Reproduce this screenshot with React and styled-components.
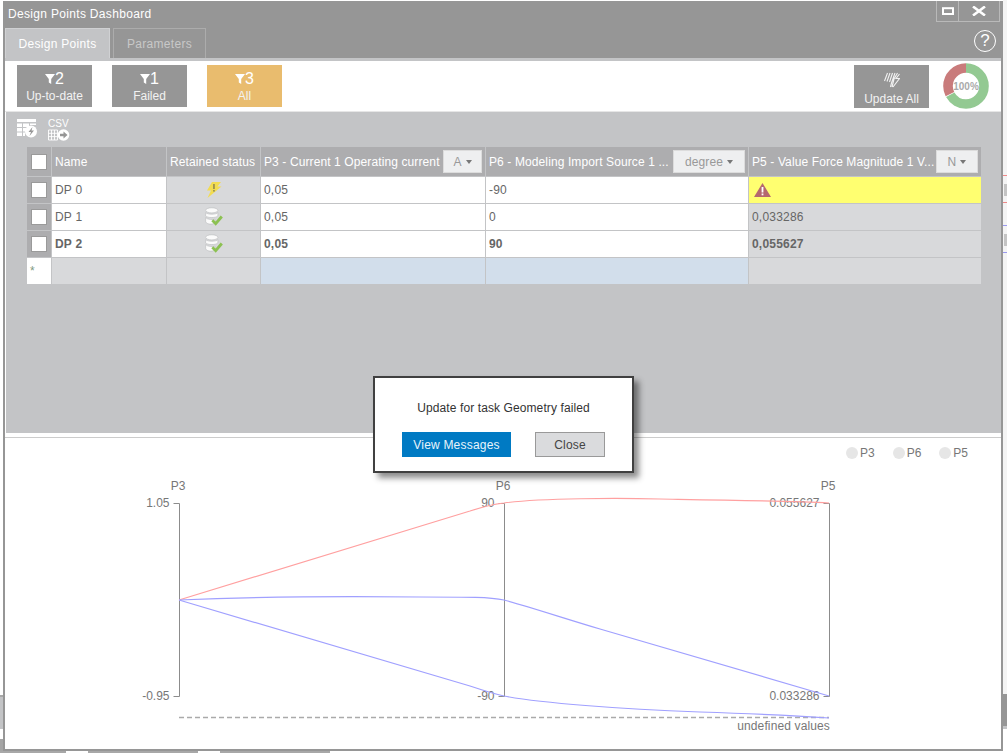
import styled, { createGlobalStyle } from 'styled-components'

const GlobalStyle = createGlobalStyle`
  html, body { margin: 0; padding: 0; }
  body {
    width: 1007px;
    height: 753px;
    overflow: hidden;
    font-family: "Liberation Sans", Arial, sans-serif;
    font-size: 12px;
    background:
      linear-gradient(#969696, #969696) right 694px / 4px 32px no-repeat,
      linear-gradient(#c3c4c6, #c3c4c6) right 726px / 4px 3px no-repeat,
      linear-gradient(#ee8888, #ee8888) right 175px / 4px 1px no-repeat,
      linear-gradient(#ee8888, #ee8888) right 202px / 4px 1px no-repeat,
      linear-gradient(#9999ee, #9999ee) right 225px / 4px 1px no-repeat,
      linear-gradient(#9999ee, #9999ee) right 252px / 4px 1px no-repeat,
      linear-gradient(#c4c4c4, #c4c4c4) right 184px / 3px 12px no-repeat,
      linear-gradient(#c4c4c4, #c4c4c4) right 234px / 3px 12px no-repeat,
      linear-gradient(#f4f4f4, #f4f4f4) right 0 / 4px 694px no-repeat,
      linear-gradient(#a8a8a8, #a8a8a8) left 695px / 3px 2px no-repeat,
      linear-gradient(#c3c4c6, #c3c4c6) left 697px / 3px 32px no-repeat,
      linear-gradient(#a5a5a5, #a5a5a5) left 739px / 3px 12px no-repeat,
      linear-gradient(#a8a8a8, #a8a8a8) 0 751px / 66px 2px no-repeat,
      linear-gradient(#a8a8a8, #a8a8a8) 88px 751px / 110px 2px no-repeat,
      linear-gradient(#a8a8a8, #a8a8a8) 220px 751px / 110px 2px no-repeat,
      #ffffff;
  }
`

const Win = styled.div`
  position: relative;
  box-sizing: border-box;
  margin: 1px 0 0 3px;
  width: 1000px;
  height: 750px;
  border: 2px solid #969696;
  border-top: 0;
  background: #fff;
  display: flex;
  flex-direction: column;
`

const TitleBar = styled.div`
  height: 27px;
  flex: none;
  background: #969696;
  display: flex;
  justify-content: space-between;
  color: #fff;
`

const Title = styled.div`
  padding: 6px 0 0 3px;
  font-size: 12px;
  letter-spacing: 0.32px;
`

const WinControls = styled.div`
  display: flex;
  margin-right: 1px;
  height: 20px;
  border: 1px solid #b9b9b9;
  border-top: 0;
`

const WinButton = styled.div`
  width: ${p => p.$w}px;
  display: flex;
  align-items: center;
  justify-content: center;
  & + & { border-left: 1px solid #b9b9b9; }
`

const TabRow = styled.div`
  height: 30px;
  flex: none;
  background: #969696;
  display: flex;
  align-items: flex-end;
  gap: 3px;
  padding-right: 5px;
`

const Tab = styled.div`
  box-sizing: border-box;
  height: 30px;
  width: ${p => p.$w}px;
  display: flex;
  align-items: center;
  justify-content: center;
  letter-spacing: 0.3px;
  border: 1px solid ${p => (p.$active ? '#d0d1d3' : '#acacac')};
  border-bottom: 0;
  background: ${p => (p.$active ? '#c3c4c6' : '#969696')};
  color: ${p => (p.$active ? '#fff' : '#c8c8c8')};
`

const Help = styled.div`
  box-sizing: border-box;
  width: 22px;
  height: 22px;
  margin: 0 0 6px auto;
  border: 1.5px solid #fff;
  border-radius: 50%;
  color: #fff;
  font-size: 17px;
  line-height: 19px;
  text-align: center;
`

const Divider = styled.div`
  height: 3px;
  flex: none;
  background: #c3c4c6;
`

const Toolbar = styled.div`
  box-sizing: border-box;
  height: 51px;
  flex: none;
  padding: 4px 12px 0;
  border-bottom: 1px solid #e6e6e6;
  display: flex;
  align-items: flex-start;
  gap: 20px;
`

const FilterButton = styled.div`
  width: 75px;
  height: ${p => (p.$tall ? 43 : 42)}px;
  background: ${p => (p.$active ? '#e9bc6e' : '#969696')};
  color: #fff;
  display: flex;
  flex-direction: column;
  align-items: center;
  box-sizing: border-box;
  padding-top: 4px;
`

const Count = styled.div`
  display: flex;
  align-items: center;
  height: 19px;
  font-size: 16px;
`

const Label = styled.div`
  margin-top: 1px;
  line-height: 14px;
  color: #f2f2f2;
`

const UpdateButton = styled(FilterButton)`
  margin-left: auto;
  padding-top: 7px;
  gap: 3px;
`

const Donut = styled.svg`
  margin: -2px 0 0 -6px;
  flex: none;
`

const Panel = styled.div`
  height: 321px;
  flex: none;
  margin-left: 1px;
  background: #c3c4c6;
  padding: 7px 0 0 11px;
  box-sizing: border-box;
`

const IconBar = styled.div`
  display: flex;
  align-items: flex-start;
  gap: 11px;
  height: 28px;
`

const CsvIcon = styled.div`
  display: flex;
  flex-direction: column;
  width: 22px;
  color: #fff;
  font-size: 10px;
  line-height: 10px;
`

const Table = styled.div`
  margin-left: 10px;
  width: 954px;
  display: grid;
  grid-template-columns: 24px 114px 93px 224px 262px 232px;
  grid-template-rows: 29px repeat(4, 26px);
  gap: 1px;
`

const tones = {
  head: '#adadaf',
  white: '#ffffff',
  grey: '#d8d9db',
  blue: '#d2deeb',
  warn: '#ffff70',
}

const Cell = styled.div`
  background: ${p => tones[p.$tone || 'white']};
  color: ${p => (p.$tone === 'head' ? '#fff' : '#666')};
  font-weight: ${p => (p.$bold ? 700 : 400)};
  letter-spacing: ${p => (p.$tone === 'head' ? 0.11 : 0.2)}px;
  display: flex;
  align-items: center;
  justify-content: ${p => (p.$center ? 'center' : 'flex-start')};
  padding: 0 ${p => (p.$center ? 0 : 3)}px;
  white-space: nowrap;
  overflow: hidden;
  min-width: 0;
`

const Check = styled.div`
  box-sizing: border-box;
  width: 16px;
  height: 16px;
  background: #fff;
  border: 1px solid #9a9a9a;
`

const Star = styled.span`
  color: #7f9a7f;
  font-size: 12px;
  margin-right: auto;
  margin-left: 3px;
`

const Unit = styled.div`
  box-sizing: border-box;
  margin-left: auto;
  width: ${p => p.$w}px;
  height: 23px;
  flex: none;
  background: #eeeff0;
  border: 1px solid #dcdcdc;
  color: #999;
  display: flex;
  align-items: center;
  justify-content: center;
  gap: 4px;
  &::after {
    content: '';
    border: 3.5px solid transparent;
    border-top: 4px solid #777;
    border-bottom: 0;
  }
`

const ChartArea = styled.div`
  margin-top: 4px;
  border-top: 1px solid #cccccc;
  flex: 1;
  display: flex;
  flex-direction: column;
`

const Legend = styled.div`
  height: 32px;
  flex: none;
  display: flex;
  justify-content: flex-end;
  padding: 8px 33px 0 0;
  box-sizing: border-box;
  gap: 18px;
`

const LegendItem = styled.div`
  display: flex;
  align-items: center;
  gap: 2px;
  height: 14px;
  color: #777;
  &::before {
    content: '';
    width: 12px;
    height: 12px;
    border-radius: 50%;
    background: #e6e6e6;
  }
`

const Dialog = styled.div`
  position: absolute;
  left: 368px;
  top: 375px;
  box-sizing: border-box;
  width: 261px;
  height: 97px;
  border: 2px solid #404040;
  background: #fff;
  box-shadow: 5px 5px 6px rgba(0, 0, 0, 0.45);
  display: flex;
  flex-direction: column;
  align-items: center;
`

const Message = styled.div`
  margin-top: 23px;
  color: #333;
  letter-spacing: 0.1px;
`

const DialogButtons = styled.div`
  display: flex;
  gap: 24px;
  margin-top: 17px;
`

const DialogButton = styled.div`
  box-sizing: border-box;
  height: 25px;
  width: ${p => (p.$primary ? 109 : 70)}px;
  display: flex;
  align-items: center;
  justify-content: center;
  letter-spacing: 0.2px;
  background: ${p => (p.$primary ? '#007ac3' : '#dadbdd')};
  color: ${p => (p.$primary ? '#e8f4fb' : '#444')};
  border: ${p => (p.$primary ? '0' : '1px solid #999')};
`

const AxisLabel = styled.text`
  font-family: "Liberation Sans", Arial, sans-serif;
  font-size: 12px;
  fill: #777;
  letter-spacing: ${p => p.$spacing || 0}px;
`

const WarnCell = styled(Cell)`
  padding-left: 5px;
`

const Funnel = () => (
  <svg width="10" height="10" viewBox="0 0 10 10">
    <path d="M0 0H10L6.2 5V10L3.8 8.6V5Z" fill="#fff" />
  </svg>
)

const Bolt = () => (
  <svg width="16" height="16" viewBox="0 0 16 16">
    <path d="M6 0H15L11.5 4.5H15.5L1.5 16L5 8.5H1Z" fill="#f2dc52" />
    <rect x="7.2" y="2" width="1.5" height="5" fill="#8a8350" />
    <rect x="7.2" y="8" width="1.5" height="1.6" fill="#8a8350" />
  </svg>
)

const DbCheck = () => (
  <svg width="20" height="20" viewBox="0 0 18 18">
    <g fill="#fbfbfb" stroke="#b4b6b8" strokeWidth="0.5">
      <ellipse cx="7" cy="3" rx="5.5" ry="2.3" />
      <path d="M1.5 5C3 7 11 7 12.5 5V8C11 10 3 10 1.5 8Z" />
      <path d="M1.5 9.5C3 11.5 8 11.5 10 11V14.5C7 16 3 15.6 1.5 13.5Z" />
    </g>
    <path d="M7.5 12L10.5 15L16 8.5" fill="none" stroke="#8cc152" strokeWidth="2.6" />
  </svg>
)

const Warning = () => (
  <svg width="17" height="14" viewBox="0 0 17 14">
    <path d="M8.5 0L17 14H0Z" fill="#b5686f" />
    <rect x="7.6" y="4" width="1.8" height="5.5" fill="#fff" />
    <rect x="7.6" y="10.5" width="1.8" height="1.8" fill="#fff" />
  </svg>
)

const rows = [
  { name: 'DP 0', status: 'bolt', p3: '0,05', p6: '-90', warn: true },
  { name: 'DP 1', status: 'db', p3: '0,05', p6: '0', p5: '0,033286' },
  { name: 'DP 2', status: 'db', p3: '0,05', p6: '90', p5: '0,055627', bold: true },
]

const axes = [
  { x: 179.5, name: 'P3', nameX: 178, top: '1.05', bottom: '-0.95' },
  { x: 504.5, name: 'P6', nameX: 503, top: '90', bottom: '-90' },
  { x: 829.5, name: 'P5', nameX: 828, top: '0.055627', bottom: '0.033286' },
]

const curves = [
  { color: '#ffa0a0', d: 'M179 600L470 511C485 506 495 504 504 503C540 498 620 498 660 499C720 500 790 501 829 503' },
  { color: '#a0a0ff', d: 'M179 600C250 597 340 596 420 597C470 597 490 597 504 600C530 607 565 618.6 600 629L829 696' },
  { color: '#a0a0ff', d: 'M179 600L470 686C485 691 495 694 504 696C540 703 620 709 700 712C760 714 800 716 829 718' },
]

function ParallelChart() {
  return (
    <svg width="996" height="279" viewBox="5 470 996 279">
      {axes.map(a => (
        <g key={a.name}>
          <path d={`M${a.x - 6} 503.5H${a.x}V696.5H${a.x - 6}`} fill="none" stroke="#8c8c8c" />
          <AxisLabel x={a.nameX} y={490} textAnchor="middle">{a.name}</AxisLabel>
          <AxisLabel x={a.x - 10} y={507} textAnchor="end">{a.top}</AxisLabel>
          <AxisLabel x={a.x - 10} y={700} textAnchor="end">{a.bottom}</AxisLabel>
        </g>
      ))}
      <path d="M179 717.5H829" stroke="#aaaaaa" strokeWidth="1.6" strokeDasharray="5 3" />
      {curves.map(c => (
        <path key={c.d} d={c.d} fill="none" stroke={c.color} strokeWidth="1.2" />
      ))}
      <AxisLabel x={830} y={730} textAnchor="end" $spacing={0.13}>undefined values</AxisLabel>
    </svg>
  )
}

function Row({ row }) {
  return (
    <>
      <Cell $tone="head" $center><Check /></Cell>
      <Cell $bold={row.bold}>{row.name}</Cell>
      <Cell $tone="grey" $center>{row.status === 'bolt' ? <Bolt /> : <DbCheck />}</Cell>
      <Cell $bold={row.bold}>{row.p3}</Cell>
      <Cell $bold={row.bold}>{row.p6}</Cell>
      {row.warn ? (
        <WarnCell $tone="warn"><Warning /></WarnCell>
      ) : (
        <Cell $tone="grey" $bold={row.bold}>{row.p5}</Cell>
      )}
    </>
  )
}

export default function App() {
  return (
    <>
      <GlobalStyle />
      <Win>
        <TitleBar>
          <Title>Design Points Dashboard</Title>
          <WinControls>
            <WinButton $w={21}>
              <svg width="12" height="8" viewBox="0 0 12 8">
                <rect x="1" y="1.2" width="10" height="5.8" fill="none" stroke="#fff" strokeWidth="2" />
              </svg>
            </WinButton>
            <WinButton $w={40}>
              <svg width="14" height="10" viewBox="0 0 14 10">
                <path d="M1 0.5L13 9.5M13 0.5L1 9.5" stroke="#fff" strokeWidth="2.6" />
              </svg>
            </WinButton>
          </WinControls>
        </TitleBar>
        <TabRow>
          <Tab $active $w={105}>Design Points</Tab>
          <Tab $w={93}>Parameters</Tab>
          <Help>?</Help>
        </TabRow>
        <Divider />
        <Toolbar>
          <FilterButton>
            <Count><Funnel />2</Count>
            <Label>Up-to-date</Label>
          </FilterButton>
          <FilterButton>
            <Count><Funnel />1</Count>
            <Label>Failed</Label>
          </FilterButton>
          <FilterButton $active>
            <Count><Funnel />3</Count>
            <Label>All</Label>
          </FilterButton>
          <UpdateButton $tall>
            <svg width="16" height="16" viewBox="0 0 16 16">
              <path
                d="M3.5 1L0.5 9M6 1L3 9.5M8.5 1L5.5 10M11 1L7.5 11L6.5 15M13.5 1L10 7L8 15M15.5 2L12 6.5H15.5L9 15"
                fill="none"
                stroke="#f2f2f2"
                strokeWidth="1.1"
              />
            </svg>
            <Label>Update All</Label>
          </UpdateButton>
          <Donut width="46" height="46" viewBox="0 0 46 46">
            <g transform="rotate(-90 23 23)" fill="none" strokeWidth="9.6">
              <circle cx="23" cy="23" r="18" stroke="#93c992" strokeDasharray="75.2 113.1" />
              <circle cx="23" cy="23" r="18" stroke="#c97b7b" strokeDasharray="36.6 113.1" strokeDashoffset="-75.9" />
            </g>
            <text x="23" y="27" textAnchor="middle" fontSize="10" fontWeight="700" fill="#aaaaaa" fontFamily="Liberation Sans, Arial, sans-serif">100%</text>
          </Donut>
        </Toolbar>
        <Panel>
          <IconBar>
            <svg width="20" height="20" viewBox="0 0 20 20">
              <path d="M0 0H19V3H0ZM0 4.5H5V8H0ZM6 4.5H12V8H6ZM13 4.5H19V6H13ZM0 9H5V12.5H0ZM6 9H9V12.5H6ZM0 13.5H5V17H0ZM6 13.5H8V17H6Z" fill="#fff" />
              <circle cx="14" cy="12.5" r="6" fill="#fff" />
              <path d="M15.5 8L11.5 13H14L12.5 17L17 11.5H14.5Z" fill="#969696" />
            </svg>
            <CsvIcon>
              CSV
              <svg width="22" height="12" viewBox="0 0 22 12">
                <path d="M0.5 1H9.5V11H0.5ZM3.5 1V11M6.5 1V11M0.5 4.3H9.5M0.5 7.6H9.5" fill="none" stroke="#fff" strokeWidth="0.9" />
                <circle cx="15.5" cy="6" r="5.8" fill="#fff" />
                <path d="M12 4.8H15.5V2.5L19.5 6L15.5 9.5V7.2H12Z" fill="#969696" />
              </svg>
            </CsvIcon>
          </IconBar>
          <Table>
            <Cell $tone="head" $center><Check /></Cell>
            <Cell $tone="head">Name</Cell>
            <Cell $tone="head">Retained status</Cell>
            <Cell $tone="head">P3 - Current 1 Operating current<Unit $w={39}>A</Unit></Cell>
            <Cell $tone="head">P6 - Modeling Import Source 1 ...<Unit $w={72}>degree</Unit></Cell>
            <Cell $tone="head">P5 - Value Force Magnitude 1 V...<Unit $w={42}>N</Unit></Cell>
            {rows.map(r => (
              <Row key={r.name} row={r} />
            ))}
            <Cell $center><Star>*</Star></Cell>
            <Cell $tone="grey" />
            <Cell $tone="grey" />
            <Cell $tone="blue" />
            <Cell $tone="blue" />
            <Cell $tone="grey" />
          </Table>
        </Panel>
        <ChartArea>
          <Legend>
            <LegendItem>P3</LegendItem>
            <LegendItem>P6</LegendItem>
            <LegendItem>P5</LegendItem>
          </Legend>
          <ParallelChart />
        </ChartArea>
        <Dialog>
          <Message>Update for task Geometry failed</Message>
          <DialogButtons>
            <DialogButton $primary>View Messages</DialogButton>
            <DialogButton>Close</DialogButton>
          </DialogButtons>
        </Dialog>
      </Win>
    </>
  )
}
